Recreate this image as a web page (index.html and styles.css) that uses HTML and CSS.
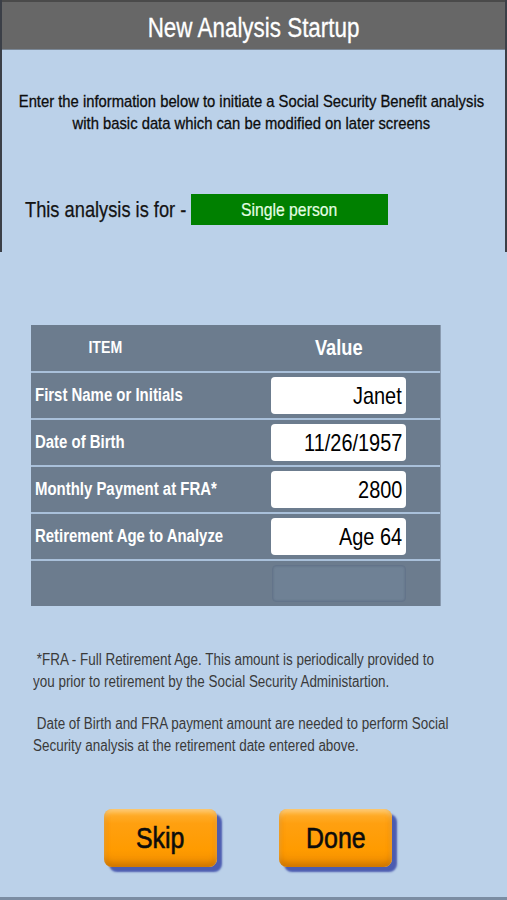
FILE: index.html
```html
<!DOCTYPE html>
<html lang="en">
<head>
<meta charset="utf-8">
<title>New Analysis Startup</title>
<link rel="stylesheet" href="styles.css">
</head>
<body>
<div class="screen">
  <div class="top">
    <header class="titlebar"><h1 class="title"><span class="sq sq-c">New Analysis Startup</span></h1></header>
    <div class="intro"><span class="sq-intro">Enter the information below to initiate a Social Security Benefit analysis<br>with basic data which can be modified on later screens</span></div>
    <div class="for-row">
      <div class="for-label"><span class="sq sq-l">This analysis is for -</span></div>
      <button class="green-btn"><span class="sq sq-c">Single person</span></button>
    </div>
  </div>

  <div class="data-table">
    <div class="row head-row">
      <div class="col-item"><span class="sq sq-c">ITEM</span></div>
      <div class="col-value"><span class="sq sq-c">Value</span></div>
    </div>
    <div class="row">
      <div class="label"><span class="sq sq-l">First Name or Initials</span></div>
      <div class="field"><span class="sq sq-r">Janet</span></div>
    </div>
    <div class="row">
      <div class="label"><span class="sq sq-l">Date of Birth</span></div>
      <div class="field"><span class="sq sq-r">11/26/1957</span></div>
    </div>
    <div class="row">
      <div class="label"><span class="sq sq-l">Monthly Payment at FRA*</span></div>
      <div class="field"><span class="sq sq-r">2800</span></div>
    </div>
    <div class="row">
      <div class="label"><span class="sq sq-l">Retirement Age to Analyze</span></div>
      <div class="field"><span class="sq sq-r">Age 64</span></div>
    </div>
    <div class="row">
      <div class="label"></div>
      <div class="field field-empty"></div>
    </div>
  </div>

  <div class="notes">
    <p class="note"><span class="sq sq-l sq-note">&nbsp;*FRA - Full Retirement Age. This amount is periodically provided to<br>you prior to retirement by the Social Security Administartion.</span></p>
    <p class="note"><span class="sq sq-l sq-note">&nbsp;Date of Birth and FRA payment amount are needed to perform Social<br>Security analysis at the retirement date entered above.</span></p>
  </div>

  <div class="actions">
    <button class="orange-btn"><span class="sq sq-c">Skip</span></button>
    <button class="orange-btn"><span class="sq sq-c">Done</span></button>
  </div>
</div>
</body>
</html>
```

FILE: styles.css
```css
* { box-sizing: border-box; }

html, body {
  margin: 0;
  padding: 0;
  background: #bbd1e9;
}

body {
  font-family: "Liberation Sans", Arial, sans-serif;
  color: #111;
}

/* the app's typeface is a tall, narrow system face: condense Liberation Sans */
.sq {
  display: inline-block;
  white-space: nowrap;
  transform: scaleX(0.83);
}
.sq-c { transform-origin: center; }
.sq-l { transform-origin: left center; }
.sq-r { transform-origin: right center; }
.sq-note { transform: scaleX(0.84); }

.screen {
  width: 507px;
  height: 900px;
  background: #bbd1e9;
  border-bottom: 3px solid #7b8da3;
  display: flex;
  flex-direction: column;
}

.top {
  flex-shrink: 0;
  height: 252px;
  border-left: 2px solid #3b3f47;
  border-right: 2px solid #3b3f47;
  display: flex;
  flex-direction: column;
}

.titlebar {
  flex-shrink: 0;
  height: 50px;
  background: #676767;
  border-top: 2px solid #4a4a4a;
  border-bottom: 1px solid #7a8796;
  display: flex;
  align-items: center;
  justify-content: center;
}

.title {
  margin: 0;
  font-size: 27px;
  font-weight: normal;
  color: #fff;
  line-height: 1;
  padding-top: 5px;
  -webkit-text-stroke: 0.3px #fff;
}

.intro {
  flex-shrink: 0;
  margin: 41px 4px 0 0;
  display: flex;
  justify-content: center;
  font-size: 17px;
  line-height: 22px;
  color: #0d0d0d;
  -webkit-text-stroke: 0.3px #0d0d0d;
}

.sq-intro {
  display: inline-block;
  flex-shrink: 0;
  white-space: nowrap;
  text-align: center;
  transform: scaleX(0.87);
  transform-origin: center;
}

.for-row {
  flex-shrink: 0;
  margin-top: 59px;
  margin-left: 23px;
  display: flex;
  align-items: center;
}

.for-label {
  width: 166px;
  font-size: 22px;
  color: #141414;
  -webkit-text-stroke: 0.25px #141414;
}

.green-btn {
  width: 197px;
  height: 31px;
  border: none;
  background: #008000;
  color: #e4ffe4;
  font-family: inherit;
  font-size: 19px;
  padding: 0;
  -webkit-text-stroke: 0.2px #e4ffe4;
}

.data-table {
  flex-shrink: 0;
  margin-top: 73px;
  margin-left: 31px;
  width: 410px;
  background: #6c7c8e;
  border-right: 1px solid #8a9bb0;
}

.row {
  height: 47px;
  border-top: 2px solid #a9c0da;
  display: flex;
  align-items: center;
}

.head-row {
  height: 46px;
  border-top: none;
}

.col-item {
  width: 148px;
  text-align: center;
  font-size: 17px;
  font-weight: bold;
  color: #fff;
}

.col-value {
  margin-left: 92px;
  width: 135px;
  text-align: center;
  font-size: 22px;
  font-weight: bold;
  color: #fff;
}

.label {
  width: 240px;
  padding-left: 4px;
  font-size: 18px;
  font-weight: bold;
  color: #fff;
}

.field {
  width: 135px;
  height: 37px;
  background: #fff;
  border-radius: 4px;
  font-size: 24px;
  color: #000;
  text-align: right;
  padding-right: 4px;
  line-height: 37px;
}

.field-empty {
  background: #6f8195;
  border: 1px solid #63748a;
  box-shadow: inset 0 0 2px rgba(70, 85, 105, 0.5);
  margin-left: 1px;
  width: 134px;
}

.notes {
  flex-shrink: 0;
  margin-top: 43px;
  padding-left: 33px;
}

.note {
  margin: 0 0 21px;
  font-size: 16px;
  line-height: 21.5px;
  color: #3a3a3a;
}

.actions {
  flex-shrink: 0;
  margin-top: 32px;
  display: flex;
  justify-content: center;
  gap: 62px;
  padding-right: 11px;
}

.orange-btn {
  width: 113px;
  height: 58px;
  border: none;
  border-radius: 8px;
  background: linear-gradient(#ffb43a 0%, #ffa010 25%, #ff9b00 70%, #f08e00 100%);
  box-shadow: 5px 5px 2px #4c5cb0,
              inset 0 -4px 6px rgba(160, 85, 0, 0.45),
              inset 0 3px 4px rgba(255, 235, 190, 0.5);
  font-family: inherit;
  font-size: 30px;
  color: #0c0c0c;
  padding: 0;
  -webkit-text-stroke: 0.6px #0c0c0c;
}
```
